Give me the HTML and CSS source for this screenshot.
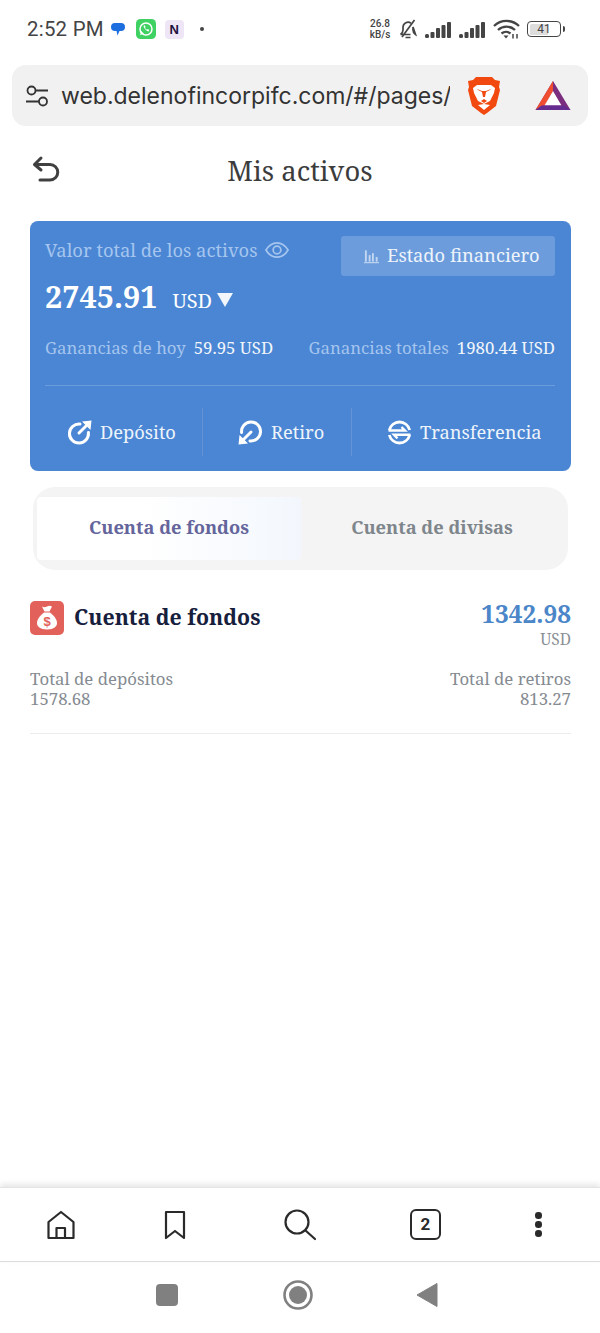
FILE: index.html
```html
<!doctype html>
<html lang="es">
 <head>
  <meta charset="utf-8">
  <title>Mis activos</title>
  <link rel="stylesheet" href="styles.css">
 </head>
 <body>
  <div class="status-bar">
   <div class="status-left">
    <span class="status-time">2:52 PM</span>
    <svg class="ic-msg" width="14" height="13" viewBox="0 0 14 13"><path d="M4 0h6a3.800 3.800 0 0 1 0 8H8.500L6.500 12.500 5.500 8H4A4 4 0 0 1 4 0z" fill="#1d6fe0"/></svg>
    <svg class="ic-wa" width="20" height="20" viewBox="0 0 20 20"><rect width="20" height="20" rx="4.500" fill="#3fd162"/><circle cx="10" cy="10" r="6" fill="none" stroke="#fff" stroke-width="1.500"/><path d="M4 16l1.300-4 2.700 2.700z" fill="#fff"/><path d="M7.500 7c.8 3 2.500 4.700 5 5.500l.8-1.500-1.600-.9-.7.600c-1-.5-1.500-1-2-2l.6-.7-.8-1.700z" fill="#fff"/></svg>
    <span class="ic-n">N</span>
    <span class="status-dot"></span>
   </div>
   <div class="status-right">
    <span class="net-speed"><span>26.8</span><span>kB/s</span></span>
    <svg width="20" height="20" viewBox="0 0 20 20" fill="none" stroke="#444" stroke-width="1.700"><path d="M2.500 15.500c1.500-1 2.500-2 2.500-4.500V8a5 5 0 0 1 8-3.800M15 8v3c0 2.500 1 3.500 2.500 4.500zM2.500 15.500h10M7.500 18.500h5"/><path d="M4 18L16.500 1"/></svg>
    <svg width="27" height="17" viewBox="0 0 27 17" fill="#444"><rect x="0" y="13" width="4" height="4" rx="1.500"/><rect x="5.500" y="11" width="4" height="6" rx="1"/><rect x="11" y="7" width="4" height="10" rx="1"/><rect x="16.500" y="4" width="4" height="13" rx="1"/><rect x="22" y="1" width="4" height="16" rx="1"/></svg>
    <svg width="27" height="17" viewBox="0 0 27 17" fill="#444"><rect x="0" y="13" width="4" height="4" rx="1.500"/><rect x="5.500" y="11" width="4" height="6" rx="1"/><rect x="11" y="7" width="4" height="10" rx="1"/><rect x="16.500" y="4" width="4" height="13" rx="1"/><rect x="22" y="1" width="4" height="16" rx="1"/></svg>
    <svg width="27" height="20" viewBox="0 0 27 20" fill="none" stroke="#444" stroke-width="2.300"><path d="M1 7a18 18 0 0 1 25 0M5 11a12.500 12.500 0 0 1 17 0M8.500 14.500a7 7 0 0 1 9 0"/><path d="M10.500 16.500h5l-2.500 3z" fill="#444" stroke="none"/><path d="M20 15v4.500M24 15v4.500" stroke-width="1.500"/></svg>
    <div class="battery">41</div>
   </div>
  </div>

  <div class="url-bar">
   <svg class="url-tune" width="24" height="24" viewBox="0 0 24 24" fill="none" stroke="#333" stroke-width="1.800"><circle cx="6.500" cy="6.500" r="4"/><path d="M10.500 6.500H23M1 17.500h13"/><circle cx="18" cy="17.500" r="4"/></svg>
   <span class="url-text">web.delenofincorpifc.com/#/pages/</span>
   <svg class="ic-brave" width="34" height="40" viewBox="0 0 34 40"><path d="M9 1h16l3 3 5 1-1 6 1 3-4 16-9 7-3 2-3-2-9-7L1 14l1-3-1-6 5-1z" fill="#f1490f"/><path d="M17 28l-6-3-4-8-1-5 4-3h14l4 3-1 5-4 8z" fill="#fff"/><path d="M10 13l5 2h4l5-2-1 1-4 2-1 5h-2l-1-5-4-2zM14 25l3-2 3 2-3 2z" fill="#f1490f"/><path d="M11 29l6-1 6 1-6 5z" fill="#fff"/></svg>
   <svg class="ic-bat" width="36" height="32" viewBox="0 0 36 32"><path d="M18 1l17.500 29H.5z" fill="#7b2d7e"/><path d="M18 1v10l-8 14.500H8L.5 30z" fill="#f04e30"/><path d="M18 11l8.500 14.500h-17z" fill="#fff"/><path d="M.5 30l6-4.500h23l6 4.500z" fill="#662d91"/></svg>
  </div>

  <div class="page-head">
   <svg class="back-ic" width="30" height="30" viewBox="0 0 30 30" fill="none" stroke="#404040" stroke-width="3" stroke-linecap="round" stroke-linejoin="round"><path d="M10 3L3.500 9.500 10 15"/><path d="M4 9.500h15a6.500 6.500 0 0 1 0 15.500H9"/></svg>
   <h1 class="page-title">Mis activos</h1>
  </div>

  <section class="assets-card">
   <div class="card-top">
    <div class="card-total">
     <div class="total-label"><span class="total-text">Valor total de los activos</span>
      <svg width="24" height="18" viewBox="0 0 25 18" fill="none" stroke="#a5c5ef" stroke-width="1.800"><path d="M1 9c3-5 7-7.500 11.500-7.500S21 4 24 9c-3 5-7 7.500-11.500 7.500S4 14 1 9z"/><circle cx="12.500" cy="9" r="4"/></svg>
     </div>
     <div class="total-value"><b>2745.91</b><span class="total-unit">USD</span><span class="total-caret"></span></div>
    </div>
    <div class="stmt-btn">
     <svg width="15" height="16" viewBox="0 0 16 16" fill="#c3d7f2"><rect x="0" y="14.500" width="16" height="1.200"/><rect x="1" y="2" width="2" height="12"/><rect x="5" y="7" width="2" height="7"/><rect x="8.500" y="5" width="2" height="9"/><rect x="12.500" y="9" width="2" height="5"/></svg>
     <span class="stmt-text">Estado financiero</span>
    </div>
   </div>
   <div class="earn-row">
    <div><span class="earn-label">Ganancias de hoy</span><span class="earn-value">59.95 USD</span></div>
    <div><span class="earn-label">Ganancias totales</span><span class="earn-value">1980.44 USD</span></div>
   </div>
   <div class="card-actions">
    <div class="action action-dep">
     <svg width="25" height="25" viewBox="0 0 25 25" fill="none" stroke="#fff" stroke-width="3" stroke-linecap="round"><path d="M13 4.100A9.500 9.500 0 1 0 21.400 12.500"/><path d="M12 13l8-8"/><path d="M15 1.500L24.500.5l-1 9.500z" fill="#fff" stroke="none"/></svg>
     <span class="action-text">Depósito</span>
    </div>
    <div class="action action-ret">
     <svg width="25" height="25" viewBox="0 0 25 25" fill="none" stroke="#fff" stroke-width="3" stroke-linecap="round"><path d="M12 20.900A9.500 9.500 0 1 0 3.600 12.500"/><path d="M13 12l-8 8"/><path d="M10 23.500L.5 24.500l1-9.500z" fill="#fff" stroke="none"/></svg>
     <span class="action-text">Retiro</span>
    </div>
    <div class="action action-tra">
     <svg width="25" height="25" viewBox="0 0 25 25" fill="none" stroke="#fff" stroke-width="2.800"><path d="M2.300 10A10.500 10.500 0 0 1 22.700 10M22.700 15A10.500 10.500 0 0 1 2.300 15"/><path d="M1.500 10.500H18L14.500 7M23.500 14.800H7L10.500 18.300" stroke-width="2.400"/></svg>
     <span class="action-text">Transferencia</span>
    </div>
   </div>
  </section>

  <div class="tabs">
   <div class="tab tab-active">Cuenta de fondos</div>
   <div class="tab tab-other">Cuenta de divisas</div>
  </div>

  <section class="account">
   <div class="account-head">
    <div class="account-name">
     <span class="bag-ic">
      <svg width="22" height="26" viewBox="0 0 22 26"><path d="M6 1.500c2 1 3 1 5 0s3-1 5 0l-2.500 5h-5z" fill="#fff"/><path d="M8 7.500h6c4 3 7 7 7 10.500 0 3.500-3 6.500-10 6.500S1 21.500 1 18C1 14.500 4 10.500 8 7.500z" fill="#fff"/><text x="11" y="21" text-anchor="middle" class="bag-sign">$</text></svg>
     </span>
     <span class="account-title">Cuenta de fondos</span>
    </div>
    <div class="account-balance">
     <div class="balance-value">1342.98</div>
     <div class="balance-unit">USD</div>
    </div>
   </div>
   <div class="account-totals">
    <div>Total de depósitos<br>1578.68</div>
    <div class="totals-right">Total de retiros<br>813.27</div>
   </div>
  </section>

  <div class="toolbar">
   <svg width="30" height="30" viewBox="0 0 30 30" fill="none" stroke="#2a2a2a" stroke-width="2.200" stroke-linejoin="round"><path d="M2.500 12L15 2l12.500 10v16h-25z"/><path d="M10.500 28V18h8.500v10"/></svg>
   <svg class="tb-bookmark" width="22" height="30" viewBox="0 0 22 30" fill="none" stroke="#2a2a2a" stroke-width="2.200" stroke-linejoin="round"><path d="M2 2h18v26l-9-7-9 7z"/></svg>
   <svg class="tb-search" width="32" height="32" viewBox="0 0 32 32" fill="none" stroke="#2a2a2a" stroke-width="2.200" stroke-linecap="round"><circle cx="13" cy="13" r="11.500"/><path d="M21.500 21.500L31 30"/></svg>
   <div class="tab-count">2</div>
   <div class="toolbar-more"><i></i><i></i><i></i></div>
  </div>

  <div class="nav-bar">
   <span class="nav-square"></span>
   <svg class="nav-home" width="30" height="30" viewBox="0 0 30 30"><circle cx="15" cy="15" r="13.500" fill="none" stroke="#808080" stroke-width="2.600"/><circle cx="15" cy="15" r="9" fill="#808080"/></svg>
   <svg width="22" height="26" viewBox="0 0 22 26"><path d="M21 1.500v23L1 13z" fill="#808080" stroke="#808080" stroke-linejoin="round"/></svg>
  </div>
 </body>
</html>
```

FILE: styles.css
```css
* {
	box-sizing: border-box;
}

body {
	margin: 0;
	width: 600px;
	height: 1333px;
	display: flex;
	flex-direction: column;
	overflow: hidden;
	background: #ffffff;
	font-family: "Noto Serif", "DejaVu Serif", serif;
	color: #333;
}

/* phone status bar */
.status-bar {
	height: 58px;
	padding: 0 34px 0 27px;
	display: flex;
	align-items: center;
	justify-content: space-between;
	font-family: Roboto, sans-serif;
	color: #444;
}

.status-left {
	display: flex;
	align-items: center;
}

.status-time {
	font-size: 20.400px;
	letter-spacing: 0.25px;
	margin-right: 7px;
}

.ic-wa {
	margin-left: 11px;
}

.ic-n {
	width: 19px;
	height: 19px;
	margin-left: 9px;
	border-radius: 4px;
	background: #eee6f6;
	color: #22103c;
	font: bold 13px/19px "Liberation Sans", sans-serif;
	text-align: center;
}

.status-dot {
	width: 4px;
	height: 4px;
	margin-left: 16px;
	border-radius: 50%;
	background: #444;
}

.status-right {
	display: flex;
	align-items: center;
	gap: 7px;
}

.net-speed {
	width: 22px;
	display: flex;
	flex-direction: column;
	align-items: center;
	font-size: 10px;
	font-weight: 500;
	line-height: 11px;
}

.battery {
	position: relative;
	width: 34px;
	height: 16px;
	margin-right: 5px;
	border: 1.500px solid #444;
	border-radius: 4px;
	background: linear-gradient(to right, #ddd 60%, #fff 60%);
	background-clip: content-box;
	padding: 1.500px;
	font-size: 12px;
	line-height: 10px;
	text-align: center;
}

.battery:after {
	content: "";
	position: absolute;
	right: -5px;
	top: 3.500px;
	width: 2.500px;
	height: 6px;
	background: #444;
	border-radius: 0 2px 2px 0;
}

/* browser url bar */
.url-bar {
	height: 61px;
	margin: 7px 12px 0;
	padding: 0 18px 0 13px;
	display: flex;
	align-items: center;
	background: #f1f1f1;
	border-radius: 14px;
}

.url-bar > * {
	flex-shrink: 0;
}

.url-text {
	width: 389px;
	margin-left: 12px;
	overflow: hidden;
	white-space: nowrap;
	font: 23px/34px Inter, Roboto, sans-serif;
	color: #333;
}

.ic-brave {
	margin-left: 17px;
}

.ic-bat {
	margin-left: 34px;
}

/* page header */
.page-head {
	position: relative;
	height: 95px;
	padding-bottom: 6px;
	display: flex;
	align-items: center;
	justify-content: center;
}

.back-ic {
	position: absolute;
	left: 31px;
	top: 29px;
}

.page-title {
	margin: 0;
	font-size: 27.400px;
	font-weight: 400;
	color: #3c3c3c;
}

/* blue card */
.assets-card {
	height: 250px;
	margin: 0 29px 0 30px;
	padding: 15px 16px 0 15px;
	background: #4a86d3;
	border-radius: 8px;
	color: #fff;
}

.card-top {
	display: flex;
	justify-content: space-between;
	align-items: flex-start;
}

.total-label {
	display: flex;
	align-items: center;
	gap: 8px;
	height: 28px;
	font-size: 18.400px;
	color: #a5c5ef;
}

.total-text {
	padding-bottom: 2px;
}

.total-value {
	display: flex;
	align-items: baseline;
	margin-top: 13px;
	height: 38px;
	line-height: 38px;
}

.total-value b {
	font-size: 30.500px;
}

.total-unit {
	margin-left: 15px;
	font-size: 20px;
}

.total-caret {
	margin-left: 5px;
	align-self: center;
	margin-top: 8px;
	border-left: 8.500px solid transparent;
	border-right: 8.500px solid transparent;
	border-top: 14px solid #f2f6fb;
}

.stmt-btn {
	width: 214px;
	height: 40px;
	padding-left: 23px;
	display: flex;
	align-items: center;
	gap: 8px;
	background: #6c9cdb;
	border-radius: 3px;
	font-size: 18.300px;
	color: #eef4fb;
}

.stmt-text {
	padding-bottom: 4px;
}

.earn-row {
	display: flex;
	justify-content: space-between;
	height: 51px;
	margin-top: 20px;
	padding-top: 1px;
	font-size: 16.800px;
	border-bottom: 1px solid #6c9cdb;
}

.earn-label {
	color: #a5c5ef;
}

.earn-value {
	margin-left: 8px;
	color: #f2f6fb;
}

.card-actions {
	display: flex;
	align-items: center;
	height: 48px;
	margin-top: 22px;
	font-size: 18.300px;
	color: #eef4fb;
}

.action {
	height: 100%;
	display: flex;
	align-items: center;
	gap: 8px;
	padding-left: 35px;
}

.action-text {
	padding-bottom: 2px;
}

.action-dep {
	width: 158px;
	padding-left: 22px;
	border-right: 1px solid #6593d6;
}

.action-ret {
	width: 149px;
	border-right: 1px solid #6593d6;
}

.action-tra {
	flex: 1;
	white-space: nowrap;
}

/* tabs */
.tabs {
	display: flex;
	height: 83px;
	margin: 16px 32px 0 33px;
	padding: 10px 0 10px 4px;
	background: #f4f4f4;
	border-radius: 22px;
}

.tab {
	flex: 1;
	display: flex;
	align-items: center;
	justify-content: center;
	padding-bottom: 5px;
	font-size: 18.300px;
	font-weight: 700;
	color: #7e868c;
}

.tab-other {
	padding-right: 5px;
}

.tab-active {
	flex: 0 0 264px;
	background: linear-gradient(to right, #ffffff 40%, #f3f7fd 100%);
	border-radius: 4px;
	color: #64659b;
}

/* account */
.account {
	margin: 0 29px 0 30px;
	padding: 28px 0 24px;
	border-bottom: 1px solid #ececec;
}

.account-head {
	display: flex;
	justify-content: space-between;
	align-items: flex-start;
	height: 50px;
}

.account-name {
	display: flex;
	align-items: center;
	gap: 10px;
	margin-top: 3px;
}

.bag-ic {
	width: 34px;
	height: 34px;
	display: flex;
	align-items: center;
	justify-content: center;
	background: #e3615b;
	border-radius: 5px;
}

.bag-sign {
	font: bold 13px "Liberation Sans", sans-serif;
	fill: #e3615b;
}

.account-title {
	font-size: 21.300px;
	font-weight: 700;
	line-height: 32px;
	padding-bottom: 2px;
	color: #16203c;
}

.account-balance {
	text-align: right;
}

.balance-value {
	font-size: 24.400px;
	font-weight: 700;
	line-height: 32px;
	color: #4a86c8;
}

.balance-unit {
	font-size: 15.500px;
	line-height: 18px;
	color: #8a9096;
}

.account-totals {
	display: flex;
	justify-content: space-between;
	margin-top: 21px;
	font-size: 16.800px;
	line-height: 20px;
	color: #858b91;
}

.totals-right {
	text-align: right;
}

/* browser toolbar + android nav */
.toolbar {
	height: 75px;
	margin-top: auto;
	padding: 0 0 0 46px;
	display: flex;
	align-items: center;
	border-top: 1px solid #e4e4e4;
	border-bottom: 1px solid #dcdcdc;
	box-shadow: 0 -3px 6px rgba(0, 0, 0, 0.1);
}

.tb-bookmark {
	margin-left: 88px;
}

.tb-search {
	margin-left: 98px;
}

.tab-count {
	width: 31px;
	height: 31px;
	margin-left: 94px;
	border: 2px solid #2a2a2a;
	border-radius: 6px;
	text-align: center;
	font: bold 17px/27px Roboto, sans-serif;
	color: #2a2a2a;
}

.toolbar-more {
	display: flex;
	flex-direction: column;
	gap: 2.500px;
	margin-left: 94px;
}

.toolbar-more i {
	width: 6.500px;
	height: 6.500px;
	border-radius: 50%;
	background: #2a2a2a;
}

.nav-bar {
	height: 71px;
	padding: 0 162px 5px 156px;
	display: flex;
	align-items: center;
	justify-content: space-between;
}

.nav-home {
	margin-left: 2px;
}

.nav-square {
	width: 22px;
	height: 22px;
	border-radius: 4px;
	background: #808080;
}
```
